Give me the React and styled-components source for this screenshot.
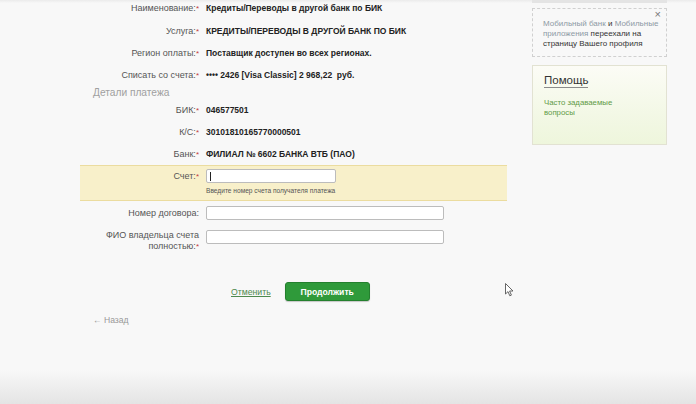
import React from 'react';
import styled, { createGlobalStyle } from 'styled-components';

const GlobalStyle = createGlobalStyle`
  html, body {
    margin: 0;
    padding: 0;
  }
  body {
    font-family: 'Liberation Sans', Arial, sans-serif;
    color: #333;
    background: #f8f8f8;
  }
`;

const Page = styled.div`
  position: relative;
  display: flex;
  align-items: flex-start;
  gap: 25px;
  height: 404px;
  padding-left: 80px;
  box-sizing: border-box;
  overflow: hidden;
  background: linear-gradient(
    to bottom,
    #ebebeb 0,
    #f8f8f8 3px,
    #f8f8f8 370px,
    #e4e4e4 404px
  );
`;

const Main = styled.div`
  width: 427px;
  display: flex;
  flex-direction: column;
`;

const Form = styled.div`
  display: flex;
  flex-direction: column;
  margin-top: -4px;
`;

const Row = styled.div`
  display: grid;
  grid-template-columns: 119px 1fr;
  column-gap: 7px;
  align-items: ${(p) => (p.$top ? 'start' : 'center')};
  min-height: ${(p) => p.$height || 22}px;
  margin-top: ${(p) => p.$offset || 0}px;
`;

const Label = styled.div`
  text-align: right;
  font-size: 9px;
  line-height: 11px;
  color: #555;
  margin-top: ${(p) => p.$shift || 0}px;

  &::after {
    content: '${(p) => (p.$required ? '*' : '')}';
    color: #c23a3a;
    font-size: 8px;
    vertical-align: top;
  }
`;

const Value = styled.div`
  font-size: 8.5px;
  font-weight: 700;
  color: #222;
  white-space: pre;
`;

const SectionTitle = styled.div`
  height: 13px;
  line-height: 13px;
  padding-left: 13px;
  font-size: 10.2px;
  color: #a0a0a0;
`;

const Highlight = styled.div`
  display: grid;
  grid-template-columns: 119px 1fr;
  column-gap: 7px;
  padding: 3px 0 3px;
  background: #f8f0ca;
  border-top: 1px solid #ebdc9f;
  border-bottom: 1px solid #ebdc9f;
`;

const FieldColumn = styled.div`
  display: flex;
  flex-direction: column;
`;

const InputWrap = styled.div`
  position: relative;
  width: ${(p) => p.$width}px;

  &::after {
    content: '';
    display: ${(p) => (p.$focused ? 'block' : 'none')};
    position: absolute;
    left: 4px;
    top: 3px;
    width: 1px;
    height: 9px;
    background: #222;
  }
`;

const TextInput = styled.input`
  display: block;
  width: 100%;
  height: 14px;
  box-sizing: border-box;
  padding: 0 4px;
  background: #fff;
  border: 1px solid #bcbcbc;
  border-radius: 2px;
  outline: none;
  font-family: inherit;
  font-size: 9px;
`;

const Hint = styled.div`
  margin-top: 2px;
  font-size: 6.6px;
  line-height: 12px;
  color: #555;
`;

const Actions = styled.div`
  display: flex;
  align-items: center;
  gap: 14px;
  margin-top: 30px;
  padding-left: 151px;
`;

const CancelLink = styled.a`
  font-size: 8.7px;
  color: #4e8a4e;
  text-decoration: underline;
  cursor: pointer;
`;

const PrimaryButton = styled.button`
  width: 85px;
  height: 19px;
  padding: 0;
  border: 1px solid #24802e;
  border-radius: 3px;
  background: #2f9a3a;
  color: #fff;
  font-family: inherit;
  font-size: 8.6px;
  font-weight: 700;
  box-shadow: 0 1px 1px rgba(0, 0, 0, 0.2);
  cursor: pointer;
`;

const BackLink = styled.a`
  margin-top: 13px;
  margin-left: 13px;
  font-size: 8.6px;
  line-height: 12px;
  color: #999;
  cursor: pointer;
`;

const Sidebar = styled.div`
  width: 135px;
  display: flex;
  flex-direction: column;
`;

const ProfileEdge = styled.div`
  height: 3px;
  background: #e4e4e4;
`;

const Notice = styled.div`
  position: relative;
  margin-top: 5px;
  padding: 10px 3px 8px 10px;
  border: 1px dashed #d0d0d0;
  font-size: 8px;
  line-height: 9.8px;
  color: #333;
`;

const NoticeLine = styled.div`
  white-space: nowrap;
`;

const NoticeLink = styled.span`
  color: #8d99a4;
`;

const Close = styled.span`
  position: absolute;
  top: 1px;
  right: 5px;
  font-size: 11px;
  color: #777;
`;

const HelpBox = styled.div`
  margin-top: 8px;
  height: 80px;
  padding: 4px 11px;
  box-sizing: border-box;
  border: 1px solid #e2e2d2;
  background: linear-gradient(to bottom, #fcfcf6 0%, #f3f8e6 60%, #eef6dc 100%);
`;

const HelpTitle = styled.div`
  display: inline-block;
  font-size: 11.5px;
  line-height: 13px;
  color: #333;
  border-bottom: 1px solid #8a8a8a;
`;

const HelpLink = styled.div`
  margin-top: 10px;
  width: 90px;
  font-size: 7.8px;
  line-height: 10px;
  color: #5f9a47;
`;

const Cursor = styled.svg`
  position: absolute;
  left: 505px;
  top: 283px;
`;

const fields = [
  ['Наименование:', 'Кредиты/Переводы в другой банк по БИК'],
  ['Услуга:', 'КРЕДИТЫ/ПЕРЕВОДЫ В ДРУГОЙ БАНК ПО БИК'],
  ['Регион оплаты:', 'Поставщик доступен во всех регионах.'],
  ['Списать со счета:', '•••• 2426 [Visa Classic] 2 968,22  руб.'],
];

const details = [
  ['БИК:', '046577501'],
  ['К/С:', '30101810165770000501'],
  ['Банк:', 'ФИЛИАЛ № 6602 БАНКА ВТБ (ПАО)'],
];

export default function App() {
  return (
    <>
      <GlobalStyle />
      <Page>
        <Main>
          <Form>
            {fields.map(([label, value], i) => (
              <Row key={label} $height={i === 0 ? 24 : 22}>
                <Label $required>{label}</Label>
                <Value>{value}</Value>
              </Row>
            ))}
            <SectionTitle>Детали платежа</SectionTitle>
            {details.map(([label, value]) => (
              <Row key={label}>
                <Label $required>{label}</Label>
                <Value>{value}</Value>
              </Row>
            ))}
            <Highlight>
              <Label $required $shift={2}>Счет:</Label>
              <FieldColumn>
                <InputWrap $width={130} $focused>
                  <TextInput />
                </InputWrap>
                <Hint>Введите номер счета получателя платежа</Hint>
              </FieldColumn>
            </Highlight>
            <Row $offset={1}>
              <Label>Номер договора:</Label>
              <InputWrap $width={238}>
                <TextInput />
              </InputWrap>
            </Row>
            <Row $top $offset={6}>
              <Label $required>
                ФИО владельца счета
                <br />
                полностью:
              </Label>
              <InputWrap $width={238}>
                <TextInput />
              </InputWrap>
            </Row>
          </Form>
          <Actions>
            <CancelLink>Отменить</CancelLink>
            <PrimaryButton>Продолжить</PrimaryButton>
          </Actions>
          <BackLink>← Назад</BackLink>
        </Main>
        <Sidebar>
          <ProfileEdge />
          <Notice>
            <Close>×</Close>
            <NoticeLine>
              <NoticeLink>Мобильный банк</NoticeLink> и <NoticeLink>Мобильные</NoticeLink>
            </NoticeLine>
            <NoticeLine>
              <NoticeLink>приложения</NoticeLink> переехали на
            </NoticeLine>
            <NoticeLine>страницу Вашего профиля</NoticeLine>
          </Notice>
          <HelpBox>
            <HelpTitle>Помощь</HelpTitle>
            <HelpLink>Часто задаваемые вопросы</HelpLink>
          </HelpBox>
        </Sidebar>
        <Cursor width="9" height="14" viewBox="0 0 9 14">
          <path d="M0.5 0.5 L0.5 11 L3 8.6 L4.8 12.8 L6.4 12.1 L4.6 8 L8 8 Z" fill="#fff" stroke="#555" strokeWidth="0.9" />
        </Cursor>
      </Page>
    </>
  );
}
